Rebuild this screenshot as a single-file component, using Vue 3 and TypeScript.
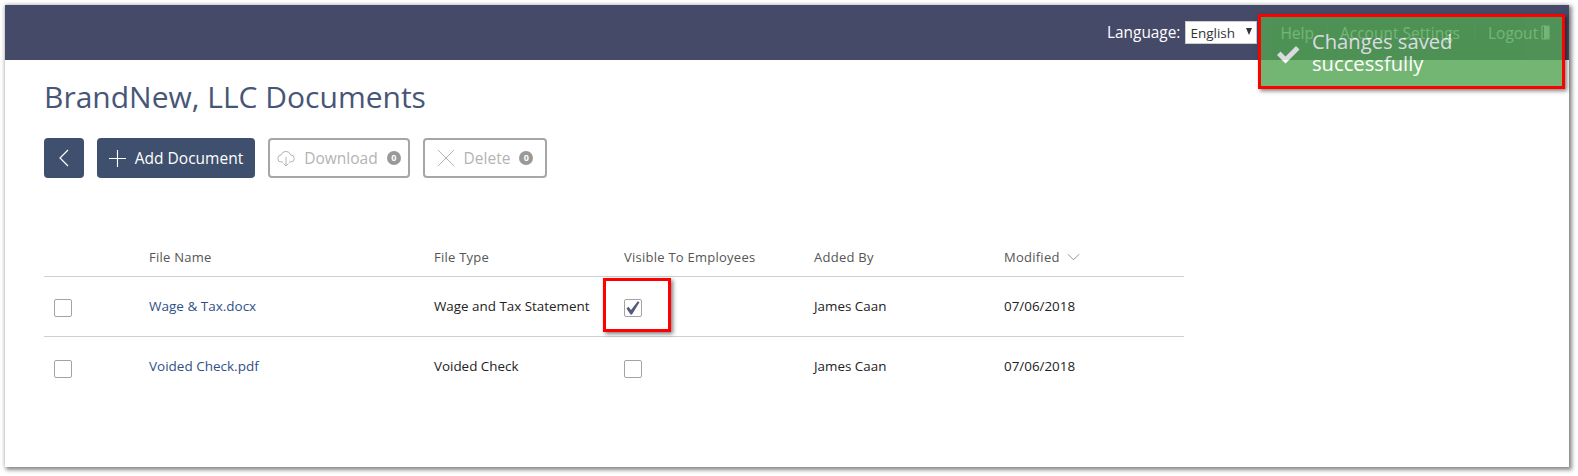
<script setup lang="ts">
interface Doc {
  name: string
  type: string
  visible: boolean
  addedBy: string
  modified: string
}

const columns = ['File Name', 'File Type', 'Visible To Employees', 'Added By']

const documents: Doc[] = [
  { name: 'Wage & Tax.docx', type: 'Wage and Tax Statement', visible: true, addedBy: 'James Caan', modified: '07/06/2018' },
  { name: 'Voided Check.pdf', type: 'Voided Check', visible: false, addedBy: 'James Caan', modified: '07/06/2018' },
]
</script>

<template>
  <div class="page">
    <div class="frame">
      <header class="topbar">
        <span class="lang-label">Language:</span>
        <span class="lang-wrap">
          <select class="lang-select">
            <option>English</option>
          </select>
        </span>
        <nav class="topnav">
          <a class="topnav__item">Help</a>
          <a class="topnav__item">Account Settings</a>
          <a class="topnav__item">
            Logout
            <svg class="door" width="10" height="17" viewBox="0 0 10 17">
              <path d="M1 2h7v13H1z" fill="none" stroke="currentColor" stroke-width="1.2" />
              <path d="M3 1.5l5 1.5v11l-5 1.5z" fill="currentColor" />
            </svg>
          </a>
        </nav>
      </header>

      <main class="content">
        <h1 class="title">BrandNew, LLC Documents</h1>

        <div class="toolbar">
          <button class="btn btn--solid btn--back" aria-label="Back">
            <svg width="12" height="20" viewBox="0 0 12 20">
              <path d="M10 2L2 10l8 8" fill="none" stroke="currentColor" stroke-width="1.2" />
            </svg>
          </button>
          <button class="btn btn--solid btn--add">
            <svg width="17" height="17" viewBox="0 0 18 18">
              <path d="M9 0v18M0 9h18" fill="none" stroke="currentColor" stroke-width="1.2" />
            </svg>
            Add Document
          </button>
          <button class="btn btn--outline btn--download">
            <svg width="18" height="18" viewBox="0 0 18 18">
              <path
                d="M6 13H4.5a3.5 3.5 0 0 1-.4-7A5 5 0 0 1 13.7 6a3.5 3.5 0 0 1 .1 7H12M9 8v9M6.5 14.5L9 17l2.5-2.5"
                fill="none"
                stroke="currentColor"
                stroke-width="1"
              />
            </svg>
            Download
            <span class="count">0</span>
          </button>
          <button class="btn btn--outline btn--delete">
            <svg width="18" height="18" viewBox="0 0 18 18">
              <path d="M1 1l16 16M17 1L1 17" fill="none" stroke="currentColor" stroke-width="1" />
            </svg>
            Delete
            <span class="count">0</span>
          </button>
        </div>

        <div class="table">
          <div class="row row--head">
            <span></span>
            <span v-for="col in columns" :key="col">{{ col }}</span>
            <span class="sort">
              Modified
              <svg width="13" height="8" viewBox="0 0 14 8">
                <path d="M1 1l6 6 6-6" fill="none" stroke="#8c8c8c" stroke-width="1" />
              </svg>
            </span>
          </div>
          <div v-for="doc in documents" :key="doc.name" class="row">
            <span class="checkbox"></span>
            <a class="file-link">{{ doc.name }}</a>
            <span>{{ doc.type }}</span>
            <span class="checkbox">
              <svg v-if="doc.visible" width="16" height="16" viewBox="0 0 16 16">
                <path d="M1.5 8.5L3.5 6.8 6 10 12.8 1.2 14.5 2.2 7 14.5H5.5z" fill="#565a7a" />
              </svg>
            </span>
            <span>{{ doc.addedBy }}</span>
            <span>{{ doc.modified }}</span>
          </div>
        </div>
      </main>

      <div class="toast">
        <svg class="toast__icon" width="26" height="22" viewBox="0 0 26 22">
          <path d="M2 12l3.5-3.5 5 5L21 3l3.5 3.5L10.5 20.5z" fill="#fff" />
        </svg>
        <span class="toast__text">Changes saved successfully</span>
      </div>
      <div class="mark mark--toast"></div>
      <div class="mark mark--check"></div>
    </div>
  </div>
</template>

<style>
html,
body {
  margin: 0;
  background: #fff;
}
</style>

<style scoped>
.page {
  width: 1578px;
  height: 476px;
  padding: 5px 9px 9px 5px;
  box-sizing: border-box;
  font-family: 'Open Sans', sans-serif;
  overflow: hidden;
}

.frame {
  position: relative;
  height: 100%;
  background: #fff;
  box-shadow: 2px 2px 4px 1px rgba(0, 0, 0, 0.45), -1px -1px 4px rgba(0, 0, 0, 0.12);
}

.topbar {
  height: 55px;
  background: #464a69;
  display: flex;
  align-items: center;
  padding-left: 1102px;
  color: #fff;
  white-space: nowrap;
}

.lang-label {
  font-size: 15.4px;
  margin-right: 5px;
}

.lang-wrap {
  position: relative;
  display: block;
  width: 72px;
  height: 23px;
}

.lang-wrap::after {
  content: '';
  position: absolute;
  right: 5px;
  top: 7px;
  border-left: 3.5px solid transparent;
  border-right: 3.5px solid transparent;
  border-top: 7px solid #333;
}

.lang-select {
  appearance: none;
  display: block;
  width: 100%;
  height: 100%;
  box-sizing: border-box;
  font-family: 'Open Sans', sans-serif;
  font-size: 13.5px;
  background: #fff;
  color: #333;
  border: 1px solid #ccc;
  border-radius: 0;
  padding: 0 0 0 4px;
}

.topnav {
  display: flex;
  margin-left: 23px;
  font-size: 15.5px;
}

.topnav__item {
  display: flex;
  align-items: center;
  gap: 3px;
  padding-right: 14px;
  margin-right: 13px;
  border-right: 1px solid #5a5e7c;
}

.topnav__item:first-child {
  padding-right: 12px;
}

.topnav__item:last-child {
  border-right: none;
  margin-right: 0;
}

.content {
  padding: 17px 0 0 39px;
}

.title {
  margin: 0;
  font-size: 30px;
  line-height: 40px;
  font-weight: 400;
  color: #475677;
}

.toolbar {
  display: flex;
  gap: 13px;
  margin-top: 21px;
}

.btn {
  height: 40px;
  box-sizing: border-box;
  display: flex;
  align-items: center;
  justify-content: center;
  gap: 9px;
  border-radius: 4px;
  font-family: inherit;
  font-size: 15.5px;
  padding: 0;
}

.btn--solid {
  background: #3f4f6e;
  border: none;
  color: #fff;
}

.btn--outline {
  background: #fff;
  border: 2px solid #a6a6a6;
  color: #b3b3b3;
}

.btn--back {
  width: 40px;
}

.btn--add {
  width: 158px;
}

.btn--download {
  width: 142px;
}

.btn--delete {
  width: 124px;
}

.count {
  width: 14px;
  height: 14px;
  border-radius: 50%;
  background: #999;
  color: #fff;
  font-size: 9px;
  font-weight: 700;
  line-height: 14px;
  text-align: center;
}

.table {
  width: 1140px;
  margin-top: 59px;
  font-size: 13.4px;
  color: #222;
}

.row {
  display: grid;
  grid-template-columns: 95px 285px 190px 190px 190px 180px;
  align-items: center;
  height: 60px;
  border-bottom: 1px solid #cfcfcf;
  box-sizing: border-box;
  padding: 0 0 2px 10px;
}

.row:last-child {
  border-bottom: none;
}

.row--head {
  height: 40px;
  padding-bottom: 0;
  color: #555;
  font-size: 13px;
  letter-spacing: 0.25px;
}

.sort {
  display: flex;
  align-items: center;
  gap: 7px;
}

.file-link {
  color: #2f5189;
  font-size: 13.5px;
  font-weight: 500;
}

.checkbox {
  width: 18px;
  height: 18px;
  box-sizing: border-box;
  border: 1px solid #a3a3a3;
  border-radius: 2px;
  display: flex;
  align-items: center;
  justify-content: center;
  margin-top: 5px;
}

.toast {
  position: absolute;
  left: 1256px;
  top: 12px;
  width: 302px;
  height: 69px;
  box-sizing: border-box;
  padding: 13px 20px 0 51px;
  background: #51a351;
  opacity: 0.8;
  color: #fff;
  font-size: 20.2px;
  line-height: 22px;
}

.toast__icon {
  position: absolute;
  left: 14px;
  top: 26px;
}

.mark {
  position: absolute;
  box-sizing: border-box;
  border: 3px solid #f00;
  box-shadow: 2px 2px 4px rgba(0, 0, 0, 0.5);
}

.mark--toast {
  left: 1253px;
  top: 9px;
  width: 307px;
  height: 75px;
}

.mark--check {
  left: 598px;
  top: 273px;
  width: 68px;
  height: 54px;
}
</style>
